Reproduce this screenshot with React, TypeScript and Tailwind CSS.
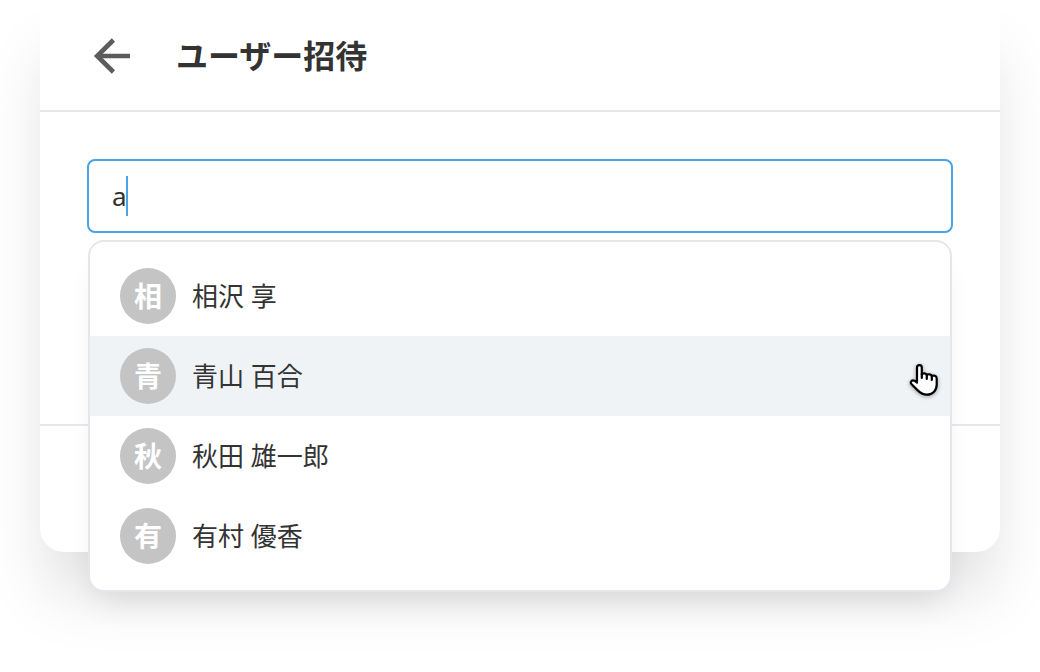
import { useState } from "react";

const users = [
  { id: 1, initial: "相", name: "相沢 享" },
  { id: 2, initial: "青", name: "青山 百合" },
  { id: 3, initial: "秋", name: "秋田 雄一郎" },
  { id: 4, initial: "有", name: "有村 優香" },
];

function BackIcon() {
  return (
    <svg viewBox="0 0 48 48" className="size-12" fill="none" stroke="#5c5c5c" strokeWidth="4.6" aria-hidden="true">
      <path d="M42 24H9" />
      <path d="M25.400 8 9.200 24 25.400 40" />
    </svg>
  );
}

function HandPointer() {
  return (
    <svg
      viewBox="0 0 40 44"
      className="pointer-events-none absolute top-[22px] right-1.5 h-11 w-10 drop-shadow-[0_1px_2px_rgba(0,0,0,0.35)]"
      fill="#fff"
      stroke="#000"
      strokeWidth="2.2"
      strokeLinejoin="round"
      strokeLinecap="round"
      aria-hidden="true"
    >
      <path d="M13 24.500V9.500a2.400 2.400 0 0 1 4.800 0v7c.8-1.600 4.400-1.400 5 .6 .9-1.300 4.400-1.100 5 .9 1.500-.9 4.900-.4 4.900 2.400v6.400c0 5.800-4.300 9.900-9.800 9.900-4 0-6.600-1.700-9.200-4.300L7.600 26.300c-2-2.400.4-4.700 2.800-3.600z" />
      <path d="M17.800 16v4M22.800 17v4M27.800 18v4" fill="none" />
    </svg>
  );
}

export default function App() {
  const [query, setQuery] = useState("a");
  const [active, setActive] = useState(2);

  return (
    <div className="min-h-screen overflow-hidden bg-white px-10 pb-[120px] font-['Noto_Sans','Noto_Sans_CJK_JP',sans-serif] text-[#333]">
      <main className="rounded-b-3xl bg-white shadow-[0_48px_64px_-8px_rgba(0,0,0,0.13)]">
        <header className="flex h-28 items-center gap-10 border-b-2 border-[#e6e6eb] pt-0.5 pl-12">
          <button type="button" aria-label="戻る">
            <BackIcon />
          </button>
          <h1 className="text-[32px] leading-12 font-bold">ユーザー招待</h1>
        </header>

        <section className="min-h-[312px] px-[47px] pt-[47px]">
          <div className="relative">
            <input
              type="text"
              aria-label="ユーザー"
              value={query}
              onChange={(e) => setQuery(e.target.value)}
              className="block h-[74px] w-full rounded-lg border-2 border-[#4aa3e6] bg-white px-[23px] text-[26px] caret-transparent outline-none"
            />
            {query === "a" && (
              <span className="absolute top-[17px] left-[39px] h-10 w-0.5 bg-[#4aa3e6]" />
            )}
            <ul className="absolute inset-x-px top-full z-10 mt-[7px] rounded-2xl border-2 border-[#e6e6eb] bg-white py-[14px] shadow-[0_20px_32px_-12px_rgba(0,0,0,0.1)]">
              {users.map((user) => (
                <li key={user.id} className="relative">
                  <button
                    type="button"
                    onMouseEnter={() => setActive(user.id)}
                    className={`flex h-20 w-full items-center gap-4 px-[30px] text-left ${active === user.id ? "bg-[#eff3f6]" : "bg-white"}`}
                  >
                    <span className="flex size-14 items-center justify-center rounded-full bg-[#c4c4c4] text-[28px] leading-10 font-bold text-white">
                      {user.initial}
                    </span>
                    <span className="text-[26px] leading-10">{user.name}</span>
                  </button>
                  {active === user.id && <HandPointer />}
                </li>
              ))}
            </ul>
          </div>
        </section>

        <footer className="h-32 border-t-2 border-[#e6e6eb]" />
      </main>
    </div>
  );
}
